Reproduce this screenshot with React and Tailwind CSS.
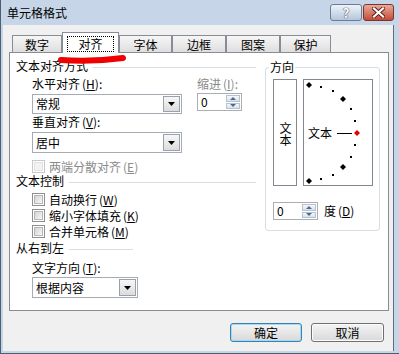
import React from "react";

const font = "font-['Noto_Sans_CJK_SC','Noto_Sans',sans-serif]";

function Key({ k }) {
  return (
    <span className="ml-[2px]">
      (<span className="underline">{k}</span>)
    </span>
  );
}

function Label({ text, k, colon = true, gray, className = "" }) {
  return (
    <div className={`h-[12px] text-[12px] leading-[12px] whitespace-nowrap ${gray ? "text-[#8a8a8a]" : "text-black"} ${className}`}>
      {text}
      {k && <Key k={k} />}
      {colon && ":"}
    </div>
  );
}

function GroupHead({ title, className = "" }) {
  return (
    <div className={`flex items-center h-[12px] ${className}`}>
      <span className="text-[12px] leading-[12px] whitespace-nowrap">{title}</span>
      <span className="flex-1 h-px mt-[3px] ml-[5px] bg-[#d5dfe5]" />
    </div>
  );
}

function Arrow({ up, color = "#000", w = 7, h = 4 }) {
  return (
    <svg width={w} height={h} viewBox={`0 0 ${w} ${h}`}>
      <polygon points={up ? `0,${h} ${w},${h} ${w / 2},0` : `0,0 ${w},0 ${w / 2},${h}`} fill={color} />
    </svg>
  );
}

function Select({ value, className = "" }) {
  return (
    <div className={`flex items-stretch border border-[#a5acb5] bg-white ${className}`}>
      <span className="flex-1 flex items-center pl-[3px] text-[12px] leading-[12px]">{value}</span>
      <span className="w-[17px] m-[1px] flex items-center justify-center border border-[#9aa1aa] bg-linear-to-b from-[#f7f7f7] to-[#dcdcdc]">
        <Arrow />
      </span>
    </div>
  );
}

function Spin({ className = "" }) {
  return (
    <div className={`flex h-[18px] border border-[#abadb3] bg-white ${className}`}>
      <span className="flex-1 flex items-center pl-[3px] text-[12px] leading-[12px]">0</span>
      <div className="flex flex-col w-[14px] m-[1px] gap-px">
        <span className="flex-1 flex items-center justify-center border border-[#b6c2d0] bg-linear-to-b from-[#f6f8fb] to-[#d8e1eb]">
          <Arrow up w={6} h={3} color="#4d6a92" />
        </span>
        <span className="flex-1 flex items-center justify-center border border-[#b6c2d0] bg-linear-to-b from-[#f6f8fb] to-[#d8e1eb]">
          <Arrow w={6} h={3} color="#4d6a92" />
        </span>
      </div>
    </div>
  );
}

function Check({ label, k, disabled, className = "" }) {
  return (
    <div className={`flex items-center h-[13px] pl-[16px] ${className}`}>
      <span className={`flex w-[13px] h-[13px] border bg-white ${disabled ? "border-[#c9c9c9]" : "border-[#8f8f8f]"}`}>
        <span className={`flex-1 m-[1px] border ${disabled ? "border-[#e2e2e2] bg-[#f2f2f2]" : "border-[#b3b7bc] bg-linear-to-br from-[#d4d4d4] to-[#f7f7f7]"}`} />
      </span>
      <span className={`ml-[4px] text-[12px] leading-[12px] whitespace-nowrap ${disabled ? "text-[#8a8a8a]" : ""}`}>
        {label}
        <Key k={k} />
      </span>
    </div>
  );
}

const tabs = [
  { name: "数字", w: "w-[50px]" },
  { name: "对齐", w: "w-[57px]", active: true },
  { name: "字体", w: "w-[53px]" },
  { name: "边框", w: "w-[54px]" },
  { name: "图案", w: "w-[54px]" },
  { name: "保护", w: "w-[51px]" },
];

function Dial() {
  const cx = 5, cy = 53, r = 48;
  const pt = (deg) => [cx + r * Math.cos((deg * Math.PI) / 180), cy - r * Math.sin((deg * Math.PI) / 180)];
  const diamonds = [90, 45, -45, -90];
  const dots = [75, 60, 30, 15, -15, -30, -60, -75];
  const dia = (x, y, s) => `${x},${y - s} ${x + s},${y} ${x},${y + s} ${x - s},${y}`;
  return (
    <svg width="68" height="105" className="block">
      {dots.map((d) => {
        const [x, y] = pt(d);
        return <rect key={d} x={Math.round(x) - 1} y={Math.round(y) - 1} width="2" height="2" fill="#000" />;
      })}
      {diamonds.map((d) => {
        const [x, y] = pt(d);
        return <polygon key={d} points={dia(Math.round(x), Math.round(y), 3)} fill="#000" />;
      })}
      <polygon points={dia(53, 53, 3)} fill="#e00000" />
      <text x="4" y="58" fontSize="12" fontFamily="'Noto Sans CJK SC', sans-serif" fill="#000">文本</text>
      <line x1="33" y1="53.5" x2="48" y2="53.5" stroke="#000" strokeWidth="1" />
    </svg>
  );
}

function Button({ children, primary, className = "" }) {
  return (
    <button
      className={`h-[19px] rounded-[3px] border text-[12px] leading-[12px] bg-linear-to-b from-[#f4f4f4] to-[#d9d9d9] ${
        primary ? "border-[#3c7fb1] shadow-[inset_0_0_0_1px_#9fdcf8]" : "border-[#707070] shadow-[inset_0_0_0_1px_#fcfcfc]"
      } ${className}`}
    >
      {children}
    </button>
  );
}

export default function App() {
  return (
    <div className={`relative w-[399px] h-[354px] flex flex-col bg-[#c6d6e8] border-l border-b border-[#4d5e72] ${font} text-black`}>
      {/* title bar */}
      <div className="h-[25px] flex items-start shrink-0">
        <span className="mt-[7px] ml-[6px] text-[12px] leading-[12px]">单元格格式</span>
        <div className="ml-auto mt-[4px] mr-[5px] flex gap-px">
          <span className="w-[32px] h-[17px] flex items-center justify-center rounded-[3px] border border-[#6b7d94] bg-linear-to-b from-[#eef3f9] to-[#b4c6dc] text-[13px] leading-[13px] font-bold text-white [text-shadow:0_0_1px_#334,0_0_1px_#334]">
            ?
          </span>
          <span className="w-[31px] h-[17px] flex items-center justify-center rounded-[3px] border border-[#7e3328] bg-linear-to-b from-[#e9a999] to-[#c24a38]">
            <svg width="13" height="11" viewBox="0 0 13 11">
              <path d="M2 1.5 L11 9.5 M11 1.5 L2 9.5" stroke="#5a1e16" strokeWidth="4" strokeLinecap="square" />
              <path d="M2 1.5 L11 9.5 M11 1.5 L2 9.5" stroke="#fff" strokeWidth="2.2" strokeLinecap="square" />
            </svg>
          </span>
        </div>
      </div>

      {/* client area */}
      <div className="flex-1 ml-[2px] mr-[5px] mb-[2px] bg-[#f0f0f0] flex flex-col pl-[6px] pt-[7px] border-r border-[#5c6f86]">
        {/* tabs */}
        <div className="flex items-end h-[20px] pl-[3px] relative z-10">
          {tabs.map((t) =>
            t.active ? (
              <div key={t.name} className={`${t.w} h-[21px] -mb-px bg-white border border-b-0 border-[#898c95] flex items-center justify-center`}>
                <span className="w-[47px] h-[16px] mt-[2px] border border-dotted border-black flex items-center justify-center text-[12px] leading-[12px]">
                  {t.name}
                </span>
              </div>
            ) : (
              <div
                key={t.name}
                className={`${t.w} h-[17px] border border-b-0 border-[#898c95] bg-linear-to-b from-[#f6f6f6] to-[#dedede] flex items-center justify-center text-[12px] leading-[12px] pt-[2px]`}
              >
                {t.name}
              </div>
            )
          )}
        </div>

        {/* panel */}
        <div className="w-[380px] h-[259px] border border-[#898c95] bg-white flex pl-[6px]">
          <div className="flex flex-col w-[240px] pt-[7px]">
            <GroupHead title="文本对齐方式" />
            <div className="flex pl-[16px] mt-[6px]">
              <div className="flex flex-col w-[150px]">
                <Label text="水平对齐" k="H" />
                <Select value="常规" className="h-[20px] mt-[4px]" />
                <Label text="垂直对齐" k="V" className="mt-[2px]" />
                <Select value="居中" className="h-[21px] mt-[4px]" />
              </div>
              <div className="flex flex-col ml-[15px]">
                <Label text="缩进" k="I" gray />
                <Spin className="w-[45px] mt-[3px]" />
              </div>
            </div>
            <Check label="两端分散对齐" k="E" disabled className="mt-[7px]" />
            <GroupHead title="文本控制" className="mt-[2px]" />
            <Check label="自动换行" k="W" className="mt-[6px]" />
            <Check label="缩小字体填充" k="K" className="mt-[3px]" />
            <Check label="合并单元格" k="M" className="mt-[3px]" />
            <GroupHead title="从右到左" className="mt-[4px] w-[117px]" />
            <div className="flex flex-col pl-[16px] mt-[8px]">
              <Label text="文字方向" k="T" />
              <Select value="根据内容" className="w-[106px] h-[21px] mt-[3px]" />
            </div>
          </div>

          <fieldset className="ml-[9px] mt-[8px] w-[115px] h-[170px] border border-[#d5dfe5] rounded-[3px] px-[2px]">
            <legend className="ml-[1px] px-[1px] text-[12px] leading-[12px]">方向</legend>
            <div className="pl-[5px] pt-[6px] flex flex-col">
              <div className="flex">
                <div className="w-[24px] h-[107px] border border-[#828790] flex items-center justify-center pt-[3px]">
                  <span className="text-[12px] leading-[12px] [writing-mode:vertical-rl] [text-orientation:upright]">文本</span>
                </div>
                <div className="ml-[6px] w-[70px] h-[107px] border border-[#828790]">
                  <Dial />
                </div>
              </div>
              <div className="flex items-center mt-[16px]">
                <Spin className="w-[45px]" />
                <span className="ml-[6px] text-[12px] leading-[12px]">
                  度<Key k="D" />
                </span>
              </div>
            </div>
          </fieldset>
        </div>

        {/* buttons */}
        <div className="flex justify-end gap-[9px] mt-[12px] pr-[9px]">
          <Button primary className="w-[72px]">确定</Button>
          <Button className="w-[73px]">取消</Button>
        </div>
      </div>

      {/* red marker scribble */}
      <svg className="absolute left-0 top-0 pointer-events-none" width="399" height="80">
        <path d="M60 60 Q92 62 122 58" stroke="#f00000" strokeWidth="6" strokeLinecap="round" fill="none" />
      </svg>
    </div>
  );
}
